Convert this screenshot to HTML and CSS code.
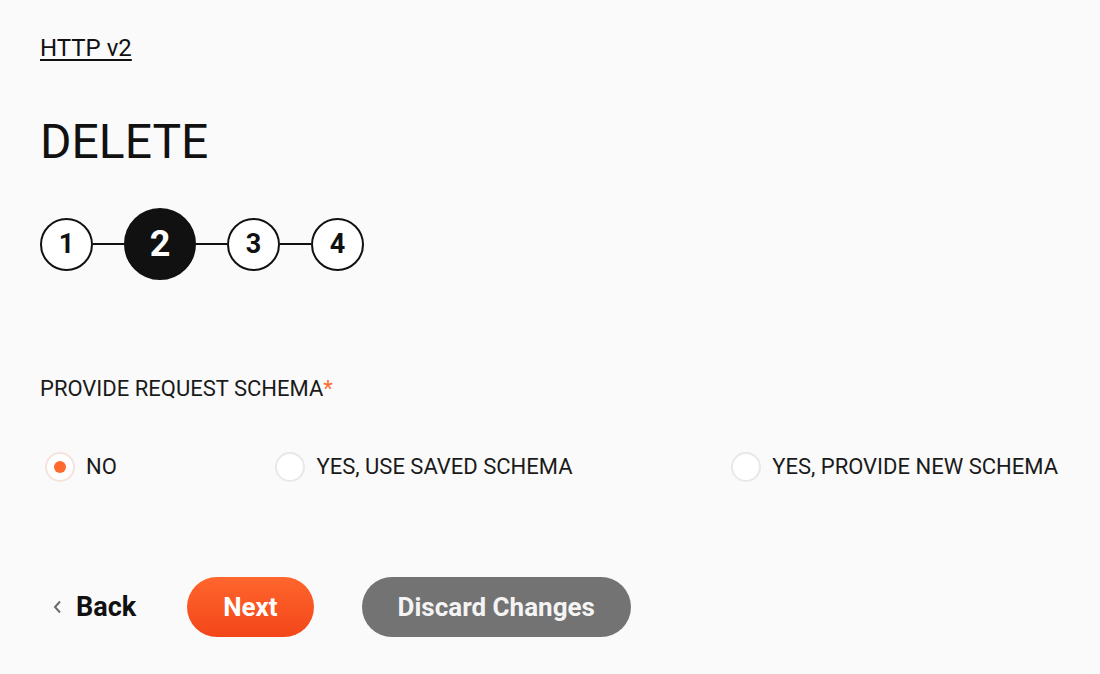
FILE: index.html
```html
<!DOCTYPE html>
<html lang="en">
<head>
<meta charset="utf-8">
<title>HTTP v2 - DELETE</title>
<link rel="stylesheet" href="styles.css">
</head>
<body>
<main class="page">
  <a class="crumb" href="#">HTTP v2</a>
  <h1 class="title">DELETE</h1>
  <ol class="stepper">
    <li class="step">1</li>
    <li class="connector"></li>
    <li class="step step-active">2</li>
    <li class="connector"></li>
    <li class="step">3</li>
    <li class="connector"></li>
    <li class="step">4</li>
  </ol>
  <div class="field-label">PROVIDE REQUEST SCHEMA<span class="req">*</span></div>
  <div class="radio-row">
    <label class="radio-opt"><span class="radio radio-on"><span class="dot"></span></span><span class="radio-text">NO</span></label>
    <label class="radio-opt"><span class="radio"></span><span class="radio-text">YES, USE SAVED SCHEMA</span></label>
    <label class="radio-opt"><span class="radio"></span><span class="radio-text">YES, PROVIDE NEW SCHEMA</span></label>
  </div>
  <div class="actions">
    <a class="back" href="#"><svg class="chev" width="9" height="14" viewBox="0 0 9 14"><path d="M7 1.5 L2 7 L7 12.5" fill="none" stroke="#6b6b6b" stroke-width="2"/></svg><span>Back</span></a>
    <button class="btn btn-next">Next</button>
    <button class="btn btn-discard">Discard Changes</button>
  </div>
</main>
</body>
</html>
```
FILE: styles.css
```css
html, body {
  margin: 0;
  padding: 0;
  background: #fafafa;
}
body {
  font-family: Roboto, "Noto Sans", "Liberation Sans", sans-serif;
  color: #111111;
}
.page {
  padding: 34px 40px 0 40px;
  display: flex;
  flex-direction: column;
  align-items: flex-start;
}
.crumb {
  font-size: 24px;
  line-height: 28px;
  color: #111111;
  text-decoration: underline;
  text-underline-offset: 3px;
  text-decoration-thickness: 2px;
}
.title {
  margin: 52px 0 0 0;
  font-size: 48px;
  line-height: 56px;
  font-weight: 400;
  color: #111111;
}
.stepper {
  list-style: none;
  margin: 38px 0 0 0;
  padding: 0;
  display: flex;
  align-items: center;
}
.step {
  width: 53px;
  height: 53px;
  box-sizing: border-box;
  border: 2px solid #111111;
  border-radius: 50%;
  display: flex;
  align-items: center;
  justify-content: center;
  font-weight: 700;
  font-size: 27px;
  color: #111111;
  background: #ffffff;
}
.step-active {
  width: 72px;
  height: 72px;
  background: #111111;
  color: #ffffff;
  font-size: 36px;
}
.connector {
  width: 31px;
  height: 2px;
  background: #111111;
}
.field-label {
  margin-top: 97px;
  font-size: 22px;
  line-height: 24px;
  color: #1a1a1a;
}
.req {
  color: #ff6a2f;
}
.radio-row {
  margin-top: 51px;
  align-self: stretch;
  display: flex;
  justify-content: space-between;
  padding: 0 2px 0 5px;
}
.radio-opt {
  display: flex;
  align-items: center;
  gap: 11px;
}
.radio {
  width: 30px;
  height: 30px;
  box-sizing: border-box;
  border: 2px solid #e8e8e8;
  border-radius: 50%;
  background: #ffffff;
  display: flex;
  align-items: center;
  justify-content: center;
}
.radio-on {
  border-color: #f5e3dd;
}
.dot {
  width: 12px;
  height: 12px;
  border-radius: 50%;
  background: #ff6a2f;
}
.radio-text {
  font-size: 22px;
  line-height: 24px;
  color: #1a1a1a;
}
.actions {
  margin-top: 95px;
  display: flex;
  align-items: center;
}
.back {
  display: flex;
  align-items: center;
  gap: 14px;
  padding-left: 13px;
  font-weight: 700;
  font-size: 27px;
  color: #111111;
  text-decoration: none;
  margin-right: 51px;
}
.chev {
  display: block;
}
.btn {
  height: 60px;
  border: none;
  border-radius: 30px;
  padding: 0 36px;
  font-family: Roboto, "Noto Sans", "Liberation Sans", sans-serif;
  font-weight: 700;
  font-size: 26px;
  color: #ffffff;
}
.btn-next {
  background: linear-gradient(to bottom, #ff662d, #f3461a);
  margin-right: 48px;
}
.btn-discard {
  background: #737373;
  color: #f4f4f4;
}
```
